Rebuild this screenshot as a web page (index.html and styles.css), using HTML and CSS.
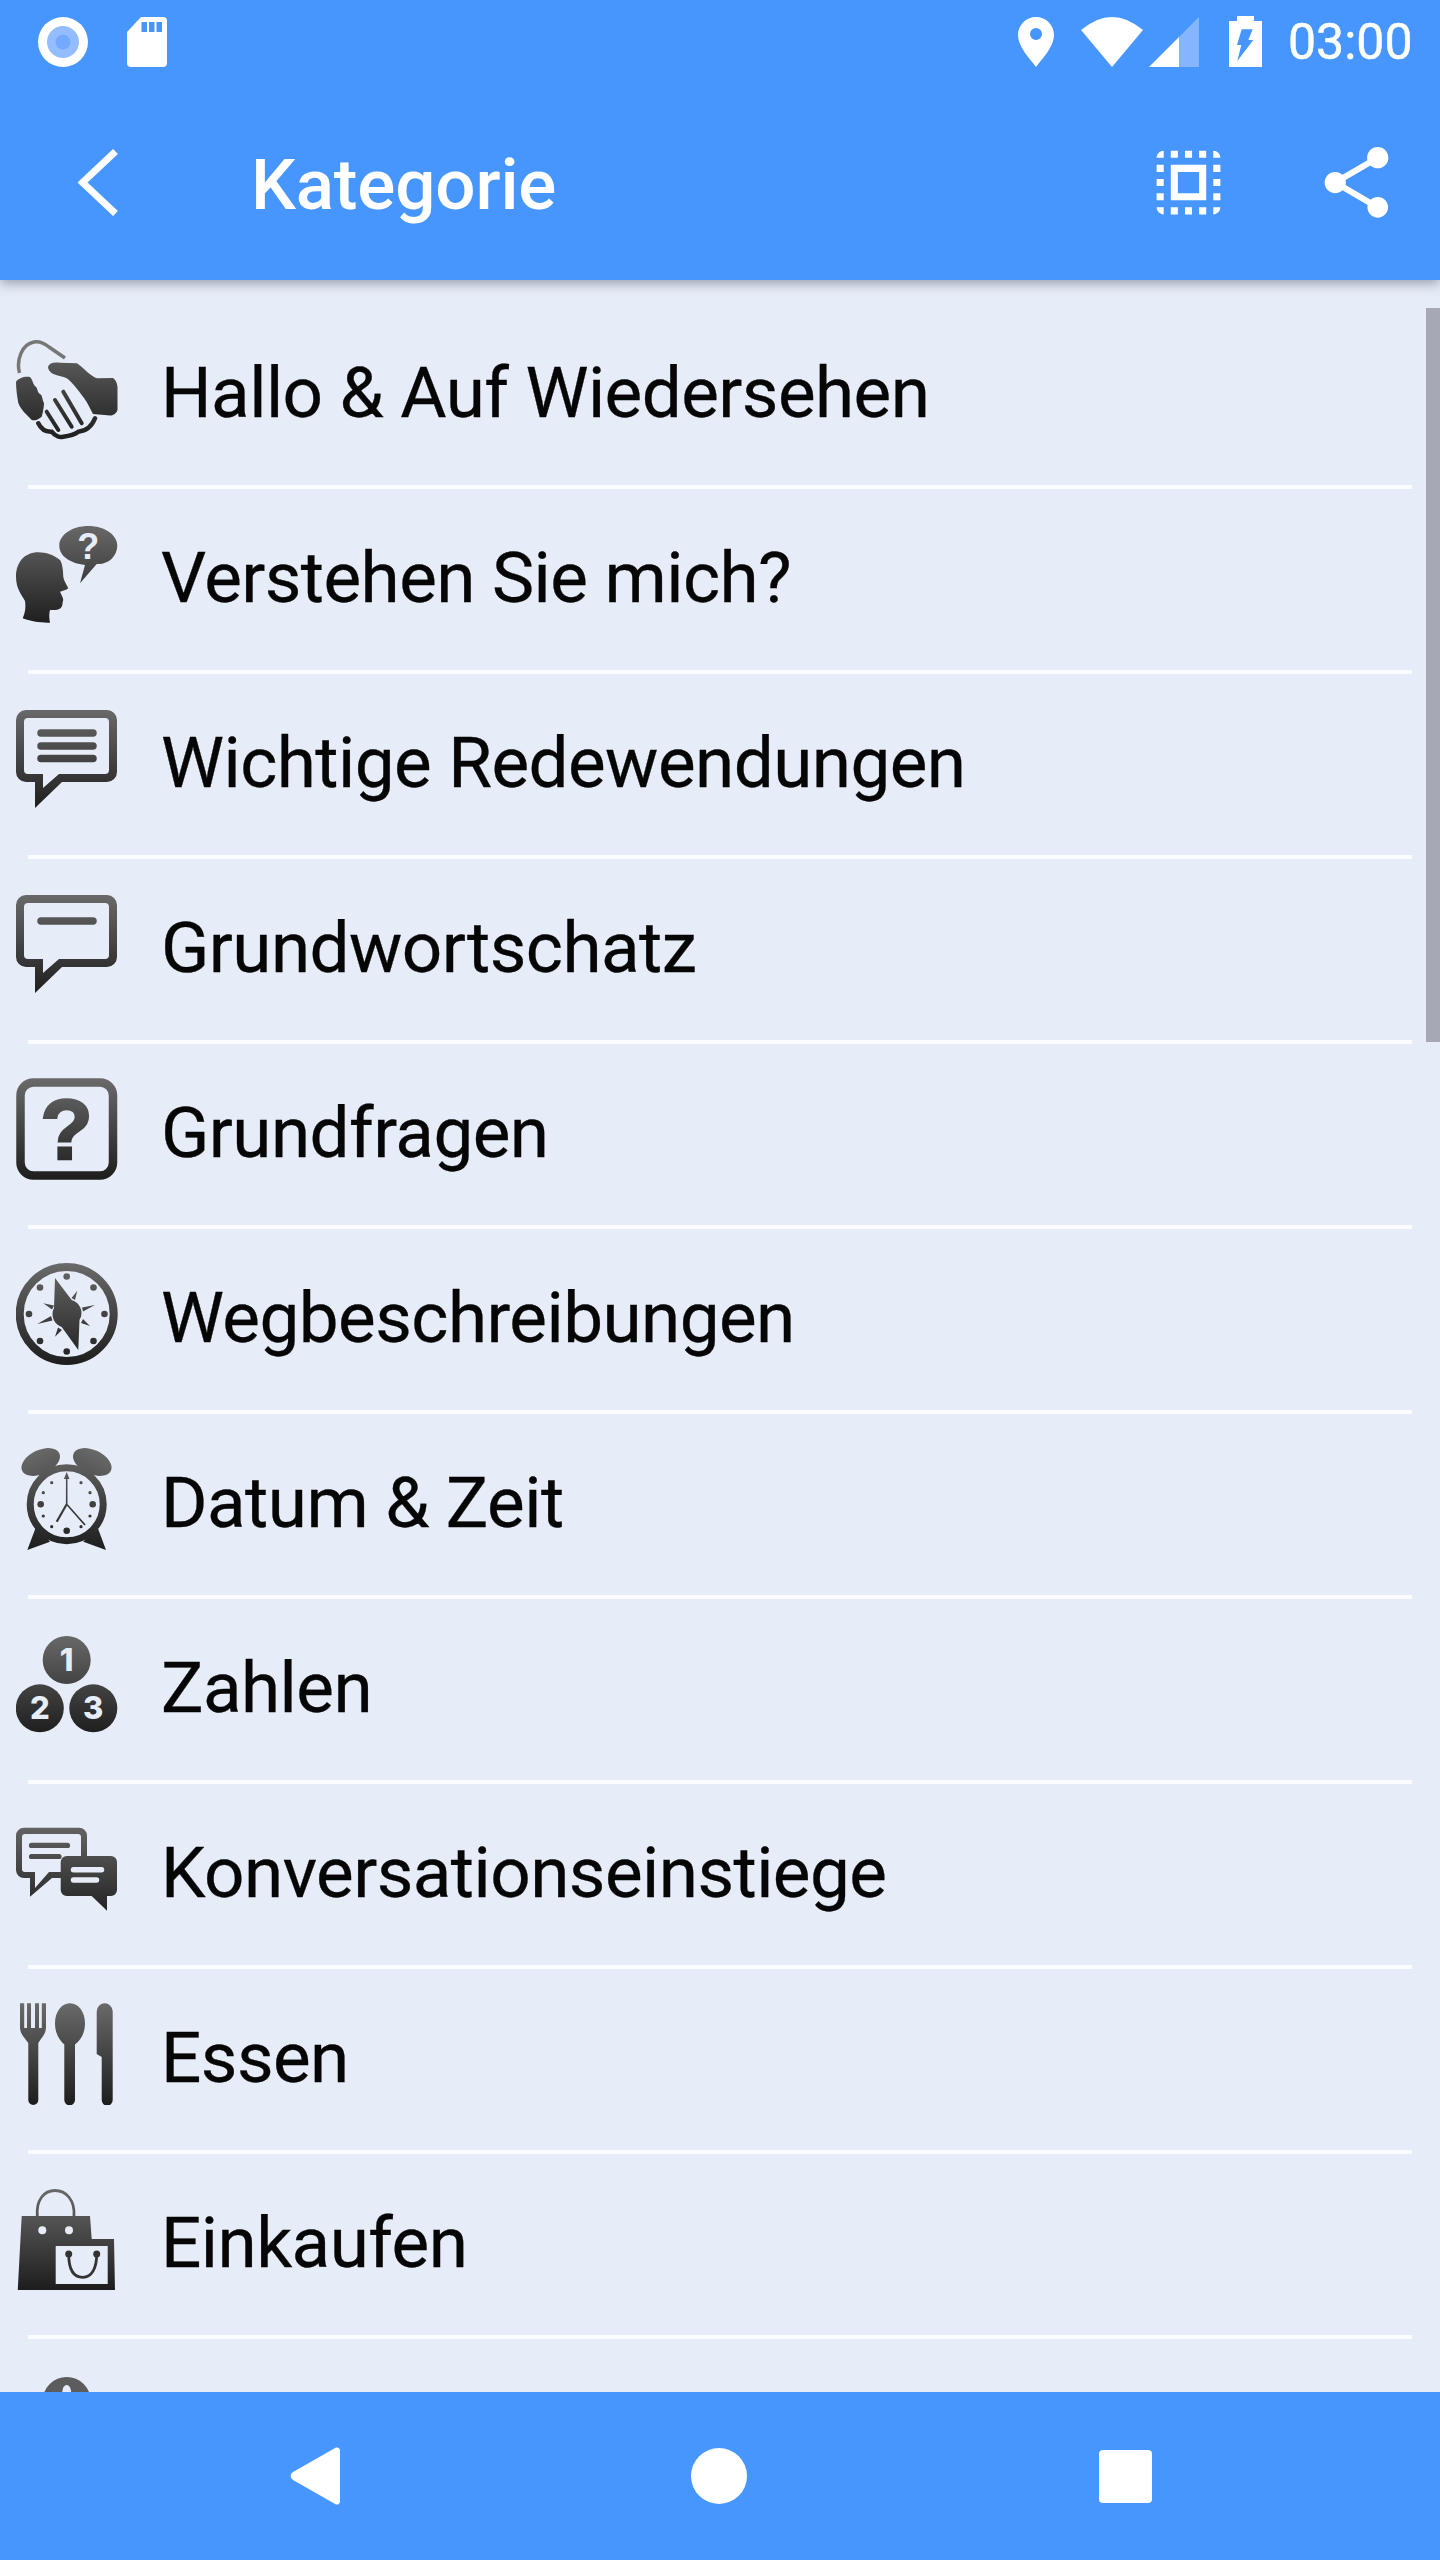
FILE: index.html
```html
<!DOCTYPE html>
<html lang="de">
<head>
	<meta charset="UTF-8">
	<title>Kategorie</title>
	<link rel="stylesheet" href="styles.css">
</head>
<body>
	<svg class="defs" width="0" height="0">
		<defs>
			<linearGradient id="ink" gradientUnits="userSpaceOnUse" x1="0" y1="0" x2="0" y2="102">
				<stop offset="0" stop-color="#6a6a6a"/>
				<stop offset="1" stop-color="#1d1d1d"/>
			</linearGradient>
		</defs>
	</svg>

	<header class="top">
		<div class="statusbar">
			<svg class="st-ring" viewBox="0 0 50 50"><circle cx="25" cy="25" r="25" fill="#fff"/><circle cx="25" cy="25" r="16" fill="#94bdff"/><circle cx="25" cy="25" r="7.5" fill="#74a9ff"/></svg>
			<svg class="st-sd" viewBox="0 0 40 50"><path fill="#fff" d="M14 0H36a4 4 0 0 1 4 4V46a4 4 0 0 1-4 4H4a4 4 0 0 1-4-4V15Z"/><path fill="#4696fe" d="M14.500 5h5.500v10h-5.500zM22 5h5.500v10h-5.500zM29.500 5h5.500v10h-5.500z"/></svg>
			<div class="st-right">
				<svg class="st-pin" viewBox="0 0 36 50"><path fill="#fff" fill-rule="evenodd" d="M18 0C8 0 0 8 0 18C0 30 12 42 18 50C24 42 36 30 36 18C36 8 28 0 18 0ZM18 11a6 6 0 1 1 0 12a6 6 0 1 1 0-12Z"/></svg>
				<svg class="st-wifi" viewBox="0 0 62 50"><path fill="#fff" d="M0 13Q31-13 62 13L31 50Z"/></svg>
				<svg class="st-signal" viewBox="0 0 50 50"><path fill="#85b5ff" d="M30 20L50 0V50H30Z"/><path fill="#fff" d="M0 50L30 20V50Z"/></svg>
				<svg class="st-batt" viewBox="0 0 33 51"><path fill="#fff" d="M8 0H25V5H33V51H0V5H8Z"/><path fill="#4696fe" d="M12.700 13.300H23.700L19.300 24H24.300L8.300 45L12.300 29H8Z"/></svg>
				<span class="st-time">03:00</span>
			</div>
		</div>
		<div class="toolbar">
			<svg class="tb-back" viewBox="0 0 40 67"><path fill="none" stroke="#fff" stroke-width="7" d="M37.500 2.500L4.500 33.500L37.500 64.500"/></svg>
			<h1 class="tb-title">Kategorie</h1>
			<svg class="tb-icon tb-select" viewBox="0 0 24 24"><path fill="#fff" d="M3 5h2V3c-1.100 0-2 .9-2 2zm0 8h2v-2H3v2zm4 8h2v-2H7v2zM3 9h2V7H3v2zm10-6h-2v2h2V3zm6 0v2h2c0-1.100-.9-2-2-2zM5 21v-2H3c0 1.100.9 2 2 2zm-2-4h2v-2H3v2zM9 3H7v2h2V3zm2 18h2v-2h-2v2zm8-8h2v-2h-2v2zm0 8c1.100 0 2-.9 2-2h-2v2zm0-12h2V7h-2v2zm0 8h2v-2h-2v2zm-4 4h2v-2h-2v2zm0-16h2V3h-2v2zM7 17h10V7H7v10zm2-8h6v6H9V9z"/></svg>
			<svg class="tb-icon" viewBox="0 0 24 24"><path fill="#fff" d="M18 16.080c-.76 0-1.440.3-1.960.77L8.910 12.700c.05-.23.09-.46.09-.7s-.04-.47-.09-.7l7.050-4.110c.54.5 1.250.81 2.040.81 1.660 0 3-1.340 3-3s-1.340-3-3-3-3 1.340-3 3c0 .24.04.47.09.7L8.040 9.810C7.500 9.310 6.790 9 6 9c-1.660 0-3 1.340-3 3s1.340 3 3 3c.79 0 1.500-.31 2.040-.81l7.120 4.160c-.05.21-.08.43-.08.65 0 1.610 1.310 2.920 2.920 2.920 1.610 0 2.920-1.310 2.920-2.920s-1.310-2.920-2.920-2.920z"/></svg>
		</div>
	</header>

	<main class="content">
		<ul class="list">
			<li class="row">
				<svg class="icon" viewBox="0 0 102 102">
					<path fill="none" stroke="#777" stroke-width="3.500" d="M3.500 35C0 22 6 6 18 4C24 3 28 5 33 9L49 20"/>
					<path fill="url(#ink)" d="M32 29C33 25 38 24 44 24.700L61 25.300C68 30 74 38 81 40.300L97 40C100 42 101 45 101.500 49L101.500 72C100 76 97 77.500 94 77.500L77 76C74 71 72 65 68 60C62 52 56 44 50.700 40.300C45 37 33 38 32 29Z"/>
					<path fill="url(#ink)" d="M0 44C2 40 9 38 14 39C17 42 17 47 20 49C22 51 21 54 24 56C27 58 26 62 28 65C28 69 27 74 25.700 78.700C22 82 18 83 15.700 82C10 76 5 72 2.300 65C1 58 0 50 0 44Z"/>
					<path fill="none" stroke="url(#ink)" stroke-width="4" stroke-linecap="round" d="M47.300 53.700L65.700 85.300M39 62L55.700 88.700M30.700 73.700L42.300 92"/>
					<path fill="none" stroke="url(#ink)" stroke-width="4.500" stroke-linecap="round" d="M22.300 85.300C26 93 31 94 35.700 93.700C39 98 44 100 47.300 98.700C53 98 58 97 62.300 93.700C70 93 76 88 79 80.300"/>
				</svg>
				<span class="row-label">Hallo &amp; Auf Wiedersehen</span>
			</li>
			<hr class="divider">
			<li class="row">
				<svg class="icon" viewBox="0 0 102 102">
					<path fill="url(#ink)" d="M72.300 3C88.300 3 101.300 11.700 101.300 22.500C101.300 33.300 92 42 80.700 41L64 60.300L69 42C54 40 43.300 33.300 43.300 22.500C43.300 11.700 56.300 3 72.300 3Z"/>
					<text class="glyph glyph-cut" x="72.300" y="36" text-anchor="middle" font-size="36">?</text>
					<path fill="url(#ink)" d="M22.300 29.300C8 29.300 0 40 0 53.700C0 66 6 72 9 78C10 85 9 90 6.700 95.300C14 98 24 100 34 99.700C33 95 33 90 34 87C39 87 44 87 45.700 83.700C47 82 46 80 47.300 77C47 74 45 71 44 68.700C47 68 50 67 52.300 65.300C50 60 48 58 47.300 53.700C47 45 46 40 44 37C38 32 30 29.300 22.300 29.300Z"/>
				</svg>
				<span class="row-label">Verstehen Sie mich?</span>
			</li>
			<hr class="divider">
			<li class="row">
				<svg class="icon" viewBox="0 0 102 102">
					<path fill="url(#ink)" fill-rule="evenodd" d="M10 2H91a10 10 0 0 1 10 10V64a10 10 0 0 1-10 10H46L19 100V74H10a10 10 0 0 1-10-10V12a10 10 0 0 1 10-10ZM12 10a4 4 0 0 0-4 4V62a4 4 0 0 0 4 4H27V80L43 66H89a4 4 0 0 0 4-4V14a4 4 0 0 0-4-4Z"/>
					<path fill="none" stroke="url(#ink)" stroke-width="7.500" stroke-linecap="round" d="M25 25H77M25 38H77M25 50.500H77"/>
				</svg>
				<span class="row-label">Wichtige Redewendungen</span>
			</li>
			<hr class="divider">
			<li class="row">
				<svg class="icon" viewBox="0 0 102 102">
					<path fill="url(#ink)" fill-rule="evenodd" d="M10 2H91a10 10 0 0 1 10 10V64a10 10 0 0 1-10 10H46L19 100V74H10a10 10 0 0 1-10-10V12a10 10 0 0 1 10-10ZM12 10a4 4 0 0 0-4 4V62a4 4 0 0 0 4 4H27V80L43 66H89a4 4 0 0 0 4-4V14a4 4 0 0 0-4-4Z"/>
					<path fill="none" stroke="url(#ink)" stroke-width="7.500" stroke-linecap="round" d="M25 28H77"/>
				</svg>
				<span class="row-label">Grundwortschatz</span>
			</li>
			<hr class="divider">
			<li class="row">
				<svg class="icon" viewBox="0 0 102 102">
					<rect x="4.500" y="4.500" width="92.500" height="93" rx="13" fill="none" stroke="url(#ink)" stroke-width="8.500"/>
					<text class="glyph" x="50.500" y="81" text-anchor="middle" font-size="86" fill="url(#ink)" stroke="url(#ink)" stroke-width="2.500">?</text>
				</svg>
				<span class="row-label">Grundfragen</span>
			</li>
			<hr class="divider">
			<li class="row">
				<svg class="icon" viewBox="0 0 102 102">
					<circle cx="50.700" cy="51" r="47" fill="none" stroke="url(#ink)" stroke-width="8"/>
					<g fill="url(#ink)">
						<circle cx="50.700" cy="13.500" r="3.300"/><circle cx="50.700" cy="88.500" r="3.300"/>
						<circle cx="13" cy="51" r="3.300"/><circle cx="88.500" cy="51" r="3.300"/>
						<circle cx="24" cy="24.500" r="3.300"/><circle cx="77.500" cy="24.500" r="3.300"/>
						<circle cx="24" cy="78" r="3.300"/><circle cx="77.500" cy="78" r="3.300"/>
						<path d="M39 15L55.700 37A13.500 13.500 0 0 1 63.500 57L62.300 87L45.700 64A13.500 13.500 0 0 1 38 45Z"/>
						<path d="M61.300 27.700L59 37L55.500 35ZM79 42L67 48.500L66 44.500ZM74 63L65 60L67 56ZM39 73.700L42 64.500L46 67ZM21.300 61L35 53L36.500 57.500ZM27.300 40.300L38 42.500L36 46.500Z"/>
					</g>
				</svg>
				<span class="row-label">Wegbeschreibungen</span>
			</li>
			<hr class="divider">
			<li class="row">
				<svg class="icon" viewBox="0 0 102 102">
					<g fill="url(#ink)">
						<ellipse cx="24.700" cy="14" rx="20.500" ry="12" transform="rotate(-25 24.700 14)"/>
						<ellipse cx="76.300" cy="14" rx="20.500" ry="12" transform="rotate(25 76.300 14)"/>
						<path d="M11.300 102L20.700 77L34 93.700ZM90 102L80.700 77L67.300 93.700Z"/>
					</g>
					<circle cx="50.700" cy="56.300" r="36.500" fill="#e7edf8" stroke="url(#ink)" stroke-width="7"/>
					<g fill="url(#ink)">
						<circle cx="24.700" cy="56.300" r="3.300"/><circle cx="76.700" cy="56.300" r="3.300"/><circle cx="50.700" cy="82.700" r="3.300"/>
						<circle cx="35.700" cy="34.700" r="1.600"/><circle cx="65" cy="34.700" r="1.600"/>
						<circle cx="27.300" cy="44.700" r="1.600"/><circle cx="74" cy="44.700" r="1.600"/>
						<circle cx="27.300" cy="68" r="1.600"/><circle cx="74" cy="68" r="1.600"/>
						<circle cx="35.700" cy="78.700" r="1.600"/><circle cx="65" cy="78.700" r="1.600"/>
						<path d="M50.700 24L53.500 31L51.500 31L51.500 56L49.900 56L49.900 31L47.900 31Z"/>
					</g>
					<path fill="none" stroke="url(#ink)" stroke-width="1.700" d="M69 77L50.700 56.300"/>
					<path fill="none" stroke="url(#ink)" stroke-width="2.200" d="M40.700 73.700L50.700 56.300"/>
				</svg>
				<span class="row-label">Datum &amp; Zeit</span>
			</li>
			<hr class="divider">
			<li class="row">
				<svg class="icon" viewBox="0 0 102 102">
					<g fill="url(#ink)">
						<circle cx="50.700" cy="27" r="24"/><circle cx="23.800" cy="75.300" r="24"/><circle cx="77.300" cy="75.300" r="24"/>
					</g>
					<text class="glyph-num" x="50.700" y="38" text-anchor="middle" font-size="31">1</text>
					<text class="glyph-num" x="23.800" y="86.300" text-anchor="middle" font-size="31">2</text>
					<text class="glyph-num" x="77.300" y="86.300" text-anchor="middle" font-size="31">3</text>
				</svg>
				<span class="row-label">Zahlen</span>
			</li>
			<hr class="divider">
			<li class="row">
				<svg class="icon" viewBox="0 0 102 102">
					<path fill="url(#ink)" fill-rule="evenodd" d="M8 9.700H63a8 8 0 0 1 8 8V40H65V19a3 3 0 0 0-3-3H9a3 3 0 0 0-3 3V51a3 3 0 0 0 3 3H19V70L33 54H46V60H36L14 78.700V60H8a8 8 0 0 1-8-8V17.700a8 8 0 0 1 8-8Z"/>
					<path fill="none" stroke="url(#ink)" stroke-width="5.200" stroke-linecap="round" d="M15.500 27.400H51.500M15.500 38.500H43"/>
					<path fill="url(#ink)" d="M50.700 38H95a6 6 0 0 1 6 6V72a6 6 0 0 1-6 6H91V92.700L75.700 78H50.700a6 6 0 0 1-6-6V44a6 6 0 0 1 6-6Z"/>
					<path fill="none" stroke="#e7edf8" stroke-width="5.500" stroke-linecap="round" d="M57.500 51.700H85.500M57.500 62H80.500"/>
				</svg>
				<span class="row-label">Konversationseinstiege</span>
			</li>
			<hr class="divider">
			<li class="row">
				<svg class="icon" viewBox="0 0 102 102">
					<path fill="url(#ink)" d="M4 0.300H8.200V25H11V0.300H15V25H19V0.300H23V25H25.800V0.300H30V24C30 31 26 34 22.300 40V97a5 5 0 0 1-10 0V40C8 34 4 31 4 24Z"/>
					<path fill="url(#ink)" d="M54 0.300C62.500 0.300 69 9 69 20.300C69 30 65 37 59 41.500V97a5.300 5.300 0 0 1-10.700 0V41.500C43 37 39 30 39 20.300C39 9 45.500 0.300 54 0.300Z"/>
					<path fill="url(#ink)" d="M88.700 0.300a8 8 0 0 1 8 8V97a5.500 5.500 0 0 1-11 0V54L80.700 51V8.300a8 8 0 0 1 8-8Z"/>
				</svg>
				<span class="row-label">Essen</span>
			</li>
			<hr class="divider">
			<li class="row">
				<svg class="icon" viewBox="0 0 102 102">
					<path fill="none" stroke="url(#ink)" stroke-width="2.800" d="M21.300 28C20 12 28 2.500 39 2.500C50 2.500 59 12 58 28"/>
					<path fill="url(#ink)" d="M5.700 28H74L75.700 51H98L99 102.700H1.700Z"/>
					<rect x="39.700" y="58" width="52" height="38" fill="#e7edf8"/>
					<circle cx="26.300" cy="42.300" r="4" fill="#e7edf8"/>
					<circle cx="53" cy="42.300" r="4" fill="#e7edf8"/>
					<path fill="none" stroke="#333" stroke-width="2.800" d="M52.700 66C52.700 80 57 89.300 66.700 89.300C76 89.300 80.700 80 80.700 66"/>
					<circle cx="52.700" cy="66" r="3.500" fill="#333"/>
					<circle cx="80.700" cy="66" r="3.500" fill="#333"/>
				</svg>
				<span class="row-label">Einkaufen</span>
			</li>
			<hr class="divider">
			<li class="row">
				<svg class="icon" viewBox="0 0 102 102">
					<circle cx="50.700" cy="28" r="24" fill="#5c5c5c"/>
					<ellipse cx="50.700" cy="20" rx="4.500" ry="8" fill="#e7edf8"/>
				</svg>
			</li>
		</ul>
		<div class="scrollbar"></div>
	</main>

	<nav class="navbar">
		<svg class="nav-back" viewBox="0 0 50 58"><path fill="#fff" d="M46 .6A3 3 0 0 1 50 3.500V54.500A3 3 0 0 1 46 57.400L3 33A4.500 4.500 0 0 1 3 25Z"/></svg>
		<div class="nav-home"></div>
		<div class="nav-recent"></div>
	</nav>
</body>
</html>
```

FILE: styles.css
```css
*{
	margin: 0;
	padding: 0;
	box-sizing: border-box;
}
html,body{
	width: 1440px;
	height: 2560px;
	overflow: hidden;
}
body{
	display: flex;
	flex-direction: column;
	font-family: Roboto, "Liberation Sans", sans-serif;
	background: #e7edf8;
	color: #060606;
}
svg{
	display: block;
	flex: none;
}
.defs{
	position: absolute;
}

/* blue header */
.top{
	position: relative;
	z-index: 2;
	background: #4696fe;
	box-shadow: 0 3px 12px rgba(40,50,70,.45);
}
.statusbar{
	display: flex;
	align-items: flex-start;
	height: 84px;
	padding: 17px 30px 0 38px;
}
.st-ring{
	width: 50px;
	height: 50px;
}
.st-sd{
	width: 40px;
	height: 50px;
	margin-left: 39px;
}
.st-right{
	display: flex;
	align-items: flex-start;
	margin-left: auto;
}
.st-pin{
	width: 36px;
	height: 50px;
}
.st-wifi{
	width: 62px;
	height: 50px;
	margin-left: 27px;
}
.st-signal{
	width: 50px;
	height: 50px;
	margin-left: 6px;
}
.st-batt{
	width: 33px;
	height: 51px;
	margin: -1px 0 0 30px;
}
.st-time{
	margin-left: 26px;
	width: 122px;
	font-size: 50px;
	line-height: 50px;
	color: #fff;
	white-space: nowrap;
	-webkit-text-stroke: .5px #fff;
}
.toolbar{
	display: flex;
	align-items: center;
	height: 196px;
	padding: 0 41px 0 78px;
	color: #fff;
}
.tb-back{
	width: 40px;
	height: 67px;
}
.tb-title{
	flex: 1;
	margin: 4px 0 0 133px;
	font-size: 71px;
	font-weight: 500;
	letter-spacing: -.15px;
}
.tb-icon{
	width: 85px;
	height: 85px;
}
.tb-select{
	margin-right: 83px;
}

/* list */
.content{
	position: relative;
	flex: 1;
	min-height: 0;
	overflow: hidden;
}
.list{
	list-style: none;
	padding-top: 24px;
}
.row{
	display: flex;
	height: 181px;
	padding: 34px 0 0 16px;
}
.icon{
	width: 102px;
	height: 102px;
}
.row-label{
	margin: 3px 0 0 43px;
	font-size: 71px;
	line-height: 104px;
	letter-spacing: -.55px;
	white-space: nowrap;
	-webkit-text-stroke: .3px #060606;
}
.divider{
	height: 4px;
	margin: 0 28px;
	border: 0;
	background: #fbfcfe;
}
.glyph{
	font-family: "Liberation Sans", sans-serif;
	font-weight: 700;
}
.glyph-cut{
	fill: #e7edf8;
}
.glyph-num{
	font-family: Inter, sans-serif;
	font-weight: 800;
	fill: #e7edf8;
}
.scrollbar{
	position: absolute;
	top: 28px;
	right: 0;
	width: 14px;
	height: 734px;
	background: #a6a9b3;
}

/* bottom bar */
.navbar{
	display: flex;
	align-items: center;
	height: 168px;
	padding: 0 288px 0 290px;
	background: #4696fe;
}
.nav-back{
	width: 50px;
	height: 58px;
}
.nav-home{
	width: 56px;
	height: 56px;
	margin-left: 351px;
	border-radius: 50%;
	background: #fff;
}
.nav-recent{
	width: 53px;
	height: 53px;
	margin-left: 352px;
	border-radius: 4px;
	background: #fff;
}
```
